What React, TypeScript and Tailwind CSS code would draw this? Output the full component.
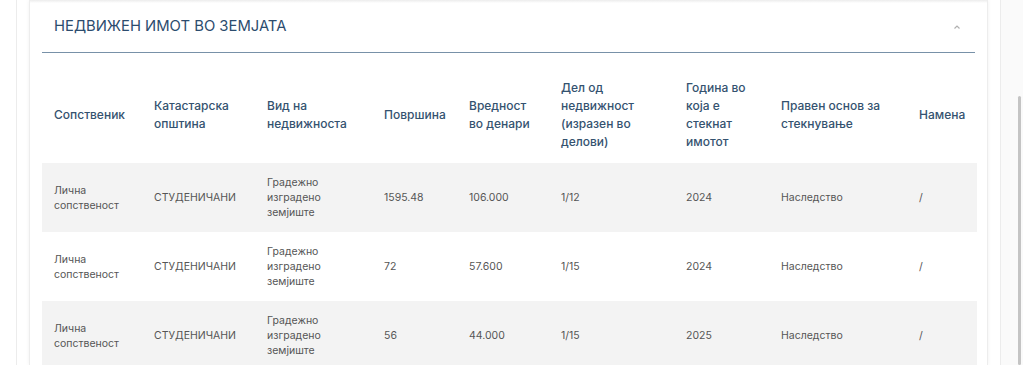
import { type FC } from 'react';

const columns = [
  { label: 'Сопственик', w: 'w-[100px]' },
  { label: 'Катастарска општина', w: 'w-[113px]' },
  { label: 'Вид на недвижноста', w: 'w-[117px]' },
  { label: 'Површина', w: 'w-[85px]' },
  { label: 'Вредност во денари', w: 'w-[92px]' },
  { label: 'Дел од недвижност (изразен во делови)', w: 'w-[125px]' },
  { label: 'Година во која е стекнат имотот', w: 'w-[95px]' },
  { label: 'Правен основ за стекнување', w: 'w-[138px]' },
  { label: 'Намена', w: 'w-[70px]' },
];

const rows = [
  ['Лична сопственост', 'СТУДЕНИЧАНИ', 'Градежно изградено земјиште', '1595.48', '106.000', '1/12', '2024', 'Наследство', '/'],
  ['Лична сопственост', 'СТУДЕНИЧАНИ', 'Градежно изградено земјиште', '72', '57.600', '1/15', '2024', 'Наследство', '/'],
  ['Лична сопственост', 'СТУДЕНИЧАНИ', 'Градежно изградено земјиште', '56', '44.000', '1/15', '2025', 'Наследство', '/'],
];

const App: FC = () => {
  return (
    <div className="flex h-[365px] w-full overflow-hidden bg-white font-['Inter',sans-serif]">
      {/* left gutter */}
      <div className="w-[17px] shrink-0 border-r border-[#ececec]" />
      <div className="w-[12px] shrink-0" />

      {/* card */}
      <div className="w-[959px] shrink-0 border-x border-[#ededed] shadow-[0_0_4px_rgba(0,0,0,0.06)]">
        <div className="h-[3px] bg-gradient-to-b from-[#ececec] to-white" />
        <div className="px-[12px]">
          <div className="flex h-[50px] items-center justify-between border-b border-[#7891a8] pl-[12px] pr-[14px]">
            <h2 className="mt-[-2px] text-[14.8px] font-normal text-[#2c4c6e]">НЕДВИЖЕН ИМОТ ВО ЗЕМЈАТА</h2>
            <svg width="8" height="6" viewBox="0 0 8 6" className="mt-[-2px] text-[#b0b0b0]">
              <path d="M1.5 4.5 L4 2 L6.5 4.5" fill="none" stroke="currentColor" strokeWidth="1.2" />
            </svg>
          </div>

          <table className="mt-[10px] w-[935px] table-fixed border-collapse">
            <thead>
              <tr>
                {columns.map((c, i) => (
                  <th
                    key={i}
                    className={`${c.w} pl-[12px] pr-[10px] pt-[16px] pb-[12px] text-left align-middle text-[12px] font-medium leading-[18px] text-[#34526f]`}
                  >
                    {c.label}
                  </th>
                ))}
              </tr>
            </thead>
            <tbody>
              {rows.map((r, i) => (
                <tr key={i} className={i % 2 === 0 ? 'bg-[#f3f3f3]' : 'bg-white'}>
                  {r.map((cell, j) => (
                    <td
                      key={j}
                      className="pl-[12px] pr-[10px] py-[12px] align-middle text-[10.5px] leading-[15px] text-[#555555]"
                    >
                      {cell}
                    </td>
                  ))}
                </tr>
              ))}
            </tbody>
          </table>
        </div>
      </div>

      <div className="w-[13px] shrink-0 border-r border-[#ececec]" />

      {/* scrollbar */}
      <div className="flex w-[22px] shrink-0 justify-end bg-[#fafafa] pr-[2px] pt-[96px]">
        <div className="h-full w-[3px] rounded-full bg-[#c4c4c4]" />
      </div>
    </div>
  );
};

export default App;
